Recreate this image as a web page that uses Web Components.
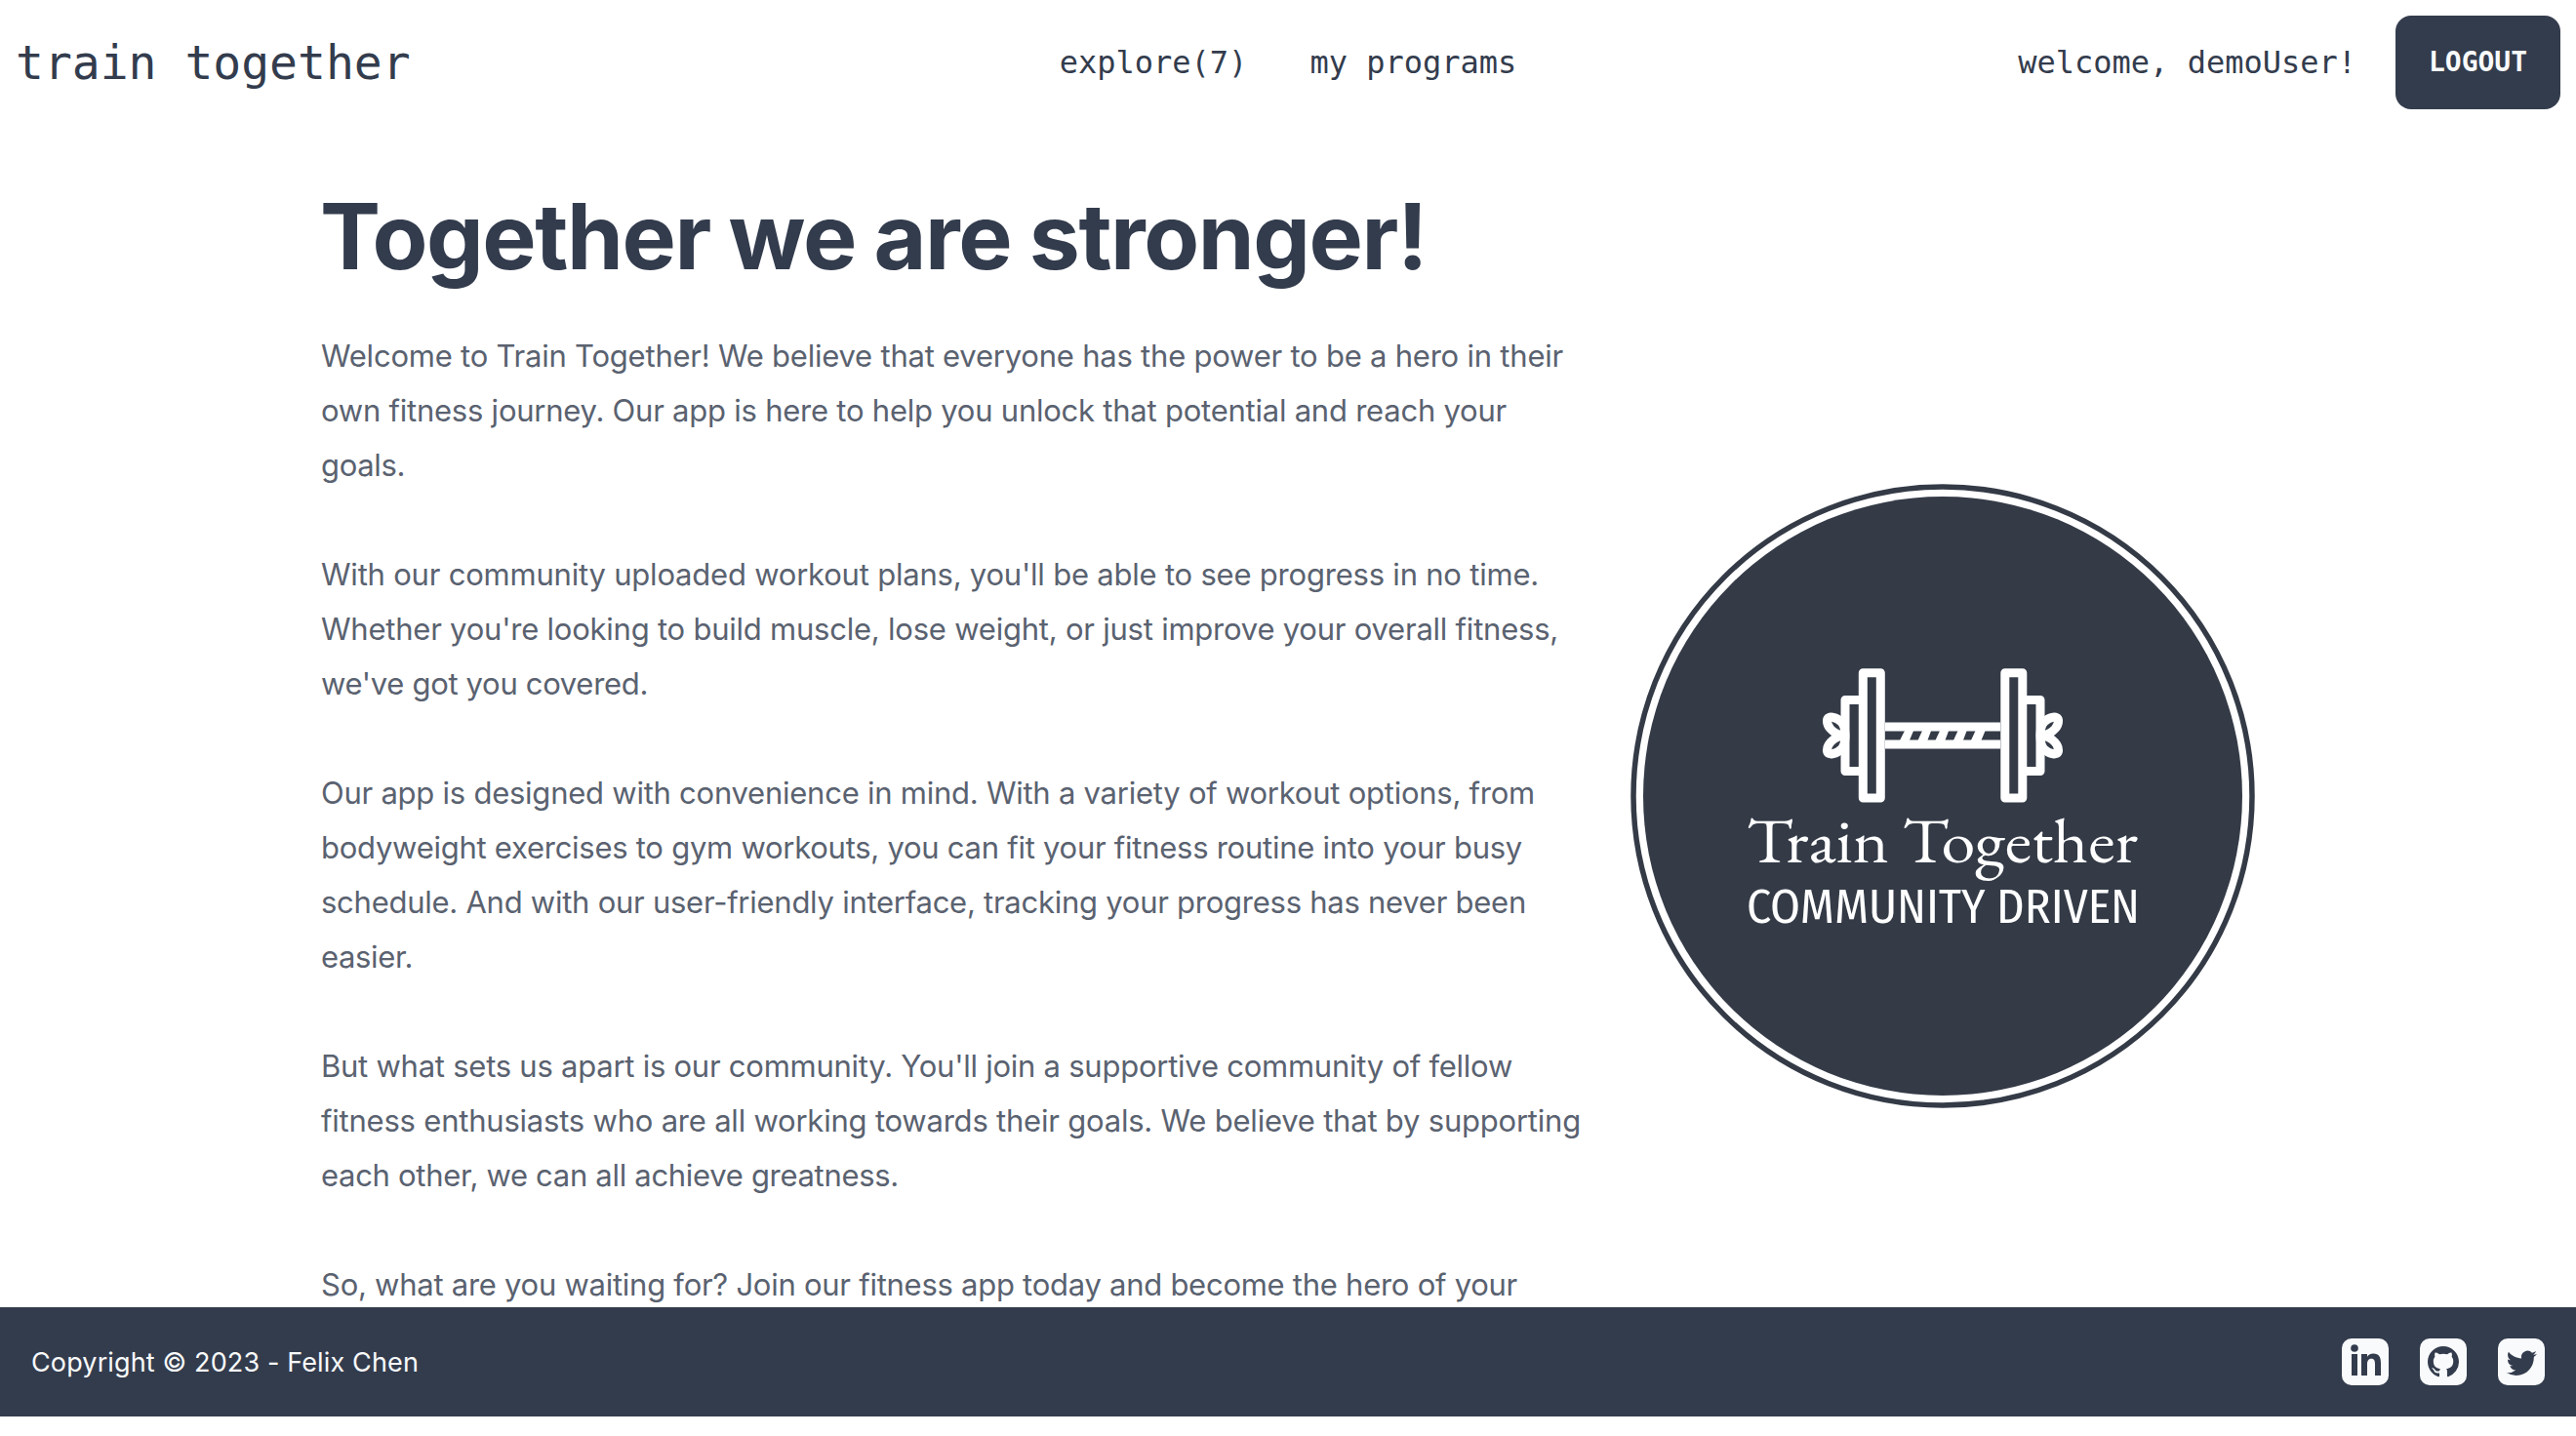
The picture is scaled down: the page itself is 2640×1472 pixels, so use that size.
<!DOCTYPE html>
<html lang="en"><head><meta charset="utf-8"><title>train together</title>
<style>html,body{margin:0;background:#fff}body{height:1472px;overflow:hidden}</style></head>
<body>
<tt-app></tt-app>
<script>
const define=(name,html,init)=>customElements.define(name,class extends HTMLElement{
  connectedCallback(){
    if(this.shadowRoot)return;
    const t=document.createElement('template');t.innerHTML=html;
    this.attachShadow({mode:'open'}).append(t.content.cloneNode(true));
    if(init)init(this);
  }
});

/* One line of text, tracked so that its advance equals the "w" attribute. */
define('tt-line',`<style>:host{display:block;white-space:pre}span{display:inline-block}</style><span><slot></slot></span>`,el=>{
  const w=+el.getAttribute('w');if(!w)return;
  const s=el.shadowRoot.querySelector('span');
  s.style.letterSpacing=((w-s.getBoundingClientRect().width)/el.textContent.length)+'px';
});

define('tt-button',`<style>
:host{display:flex;align-items:center;justify-content:center;box-sizing:border-box;width:169px;height:96px;border-radius:16px;background:#333c4d;color:#f9fafb;font:bold 28px "DejaVu Sans Mono",monospace;padding-bottom:2px}
</style><slot></slot>`);

define('tt-nav',`<style>
:host{display:flex;align-items:center;justify-content:space-between;box-sizing:border-box;height:128px;padding:0 16px;color:#333c4d;font:32px "DejaVu Sans Mono",monospace}
:host>div{display:flex;align-items:center;flex:1}
.brand{font-size:48px}
:host>.mid{gap:64px;flex:none}
:host>.end{justify-content:flex-end;gap:40px}
</style>
<div class="brand">train together</div>
<div class="mid"><span>explore(7)</span><span>my programs</span></div>
<div class="end"><span>welcome, demoUser!</span><tt-button>LOGOUT</tt-button></div>`);

define('tt-copy',`<style>
:host{display:block;width:1304px;color:#5a6270;font:31px/56px Inter,"Liberation Sans",sans-serif}
h1{margin:0 0 47px;color:#333c4d;font:bold 93px/96px Inter,sans-serif;word-spacing:-2px}
p{margin:0 0 56px;padding-left:1px}
</style>
<h1><tt-line w="1134">Together we are stronger!</tt-line></h1>
<p><tt-line w="1273">Welcome to Train Together! We believe that everyone has the power to be a hero in their</tt-line>
<tt-line w="1215">own fitness journey. Our app is here to help you unlock that potential and reach your</tt-line>
<tt-line w="86">goals.</tt-line></p>
<p><tt-line w="1248">With our community uploaded workout plans, you'll be able to see progress in no time.</tt-line>
<tt-line w="1268">Whether you're looking to build muscle, lose weight, or just improve your overall fitness,</tt-line>
<tt-line w="335">we've got you covered.</tt-line></p>
<p><tt-line w="1244">Our app is designed with convenience in mind. With a variety of workout options, from</tt-line>
<tt-line w="1231">bodyweight exercises to gym workouts, you can fit your fitness routine into your busy</tt-line>
<tt-line w="1235">schedule. And with our user-friendly interface, tracking your progress has never been</tt-line>
<tt-line w="94">easier.</tt-line></p>
<p><tt-line w="1221">But what sets us apart is our community. You'll join a supportive community of fellow</tt-line>
<tt-line w="1291">fitness enthusiasts who are all working towards their goals. We believe that by supporting</tt-line>
<tt-line w="592">each other, we can all achieve greatness.</tt-line></p>
<p><tt-line w="1226">So, what are you waiting for? Join our fitness app today and become the hero of your</tt-line></p>`);

define('tt-emblem',`<style>:host{display:block;width:640px;height:640px}svg{display:block}</style>
<svg width="640" height="640" viewBox="1671 496 640 640">
<circle cx="1991" cy="816" r="317" fill="#fff" stroke="#343b47" stroke-width="5.5"/>
<circle cx="1991" cy="816" r="307" fill="#343b47"/>
<g fill="none" stroke="#fff" stroke-width="9" stroke-linejoin="round">
<rect x="1909.3" y="689.7" width="18" height="128.4"/>
<rect x="2054.8" y="689.7" width="18" height="128.4"/>
<path d="M1909 717.5H1891V790.5H1909M2073 717.5H2091V790.5H2073"/>
<path d="M1932 745H2050M1932 763H2050"/>
<path id="leaf" d="M1888 754C1877 751 1872 744 1872.500 738C1873 733 1882 735 1887 740C1890 743 1891 748 1891 754M1888 754C1877 757 1872 764 1872.500 770C1873 775 1882 773 1887 768C1890 765 1891 760 1891 754"/>
<use href="#leaf" transform="translate(3982 0) scale(-1 1)"/>
</g>
<path fill="#fff" d="M1952.500 748H1961.500L1956.500 760H1946.500ZM1970.500 748H1979.500L1975 760H1965ZM1988.500 748H1997.500L1993 760H1983ZM2007 748H2016L2011.500 760H2001.500ZM2025 748H2035L2030 760H2019.500Z"/>
<g fill="#fff">
<text x="1790" y="884" font-family="EB Garamond,Cormorant Garamond,Liberation Serif,serif" font-size="66" textLength="401" lengthAdjust="spacingAndGlyphs">Train Together</text>
<text x="1790" y="945.500" font-family="Fira Sans Condensed,Fira Sans,Open Sans,sans-serif" font-size="50" textLength="403" lengthAdjust="spacingAndGlyphs">COMMUNITY DRIVEN</text>
</g></svg>`);

define('tt-social',`<style>:host{display:block;width:48px;height:48px}svg{display:block}</style><svg width="48" height="48"></svg>`,el=>{
  const shapes={
    linkedin:'<circle cx="13" cy="10" r="3.800"/><path d="M10 16h6v22h-6zM20 16h6v3c1-2 3.200-3.500 6.300-3.500 6 0 7.700 4 7.700 9.500v13h-6V26.500c0-3-.5-5.700-3.700-5.700-3.300 0-4.300 2.600-4.300 5.700V38h-6z"/>',
    github:'<path transform="translate(8 8) scale(2)" d="M8 0C3.580 0 0 3.580 0 8c0 3.540 2.290 6.530 5.470 7.590.4.070.55-.17.55-.38 0-.19-.01-.82-.01-1.490-2.010.37-2.530-.49-2.690-.94-.09-.23-.48-.94-.82-1.130-.28-.15-.68-.52-.01-.53.63-.01 1.080.58 1.230.82.72 1.210 1.870.87 2.330.66.070-.52.28-.87.51-1.070-1.780-.2-3.640-.89-3.640-3.950 0-.87.31-1.590.82-2.150-.08-.2-.36-1.020.08-2.120 0 0 .67-.21 2.200.82.64-.18 1.320-.27 2-.27s1.360.09 2 .27c1.530-1.040 2.200-.82 2.200-.82.44 1.100.16 1.920.08 2.120.51.56.82 1.270.82 2.150 0 3.070-1.870 3.750-3.650 3.950.29.25.54.73.54 1.480 0 1.070-.01 1.930-.01 2.200 0 .21.15.46.55.38A8.010 8.010 0 0 0 16 8c0-4.420-3.580-8-8-8z"/>',
    twitter:'<path transform="translate(8.800 9.700) scale(1.300)" d="M23.950 4.570a10 10 0 0 1-2.820.775 4.958 4.958 0 0 0 2.163-2.723c-.951.555-2.005.959-3.127 1.184a4.920 4.920 0 0 0-8.384 4.482C7.690 8.095 4.067 6.130 1.640 3.162a4.822 4.822 0 0 0-.666 2.475c0 1.710.87 3.213 2.188 4.096a4.904 4.904 0 0 1-2.228-.616v.060a4.923 4.923 0 0 0 3.946 4.827 4.996 4.996 0 0 1-2.212.085 4.936 4.936 0 0 0 4.604 3.417 9.867 9.867 0 0 1-6.102 2.105c-.39 0-.779-.023-1.170-.067a13.995 13.995 0 0 0 7.557 2.209c9.053 0 13.998-7.496 13.998-13.985 0-.21 0-.42-.015-.63A9.935 9.935 0 0 0 24 4.590z"/>'};
  el.shadowRoot.querySelector('svg').innerHTML='<rect width="48" height="48" rx="10" fill="#f9fafb"/><g fill="#333c4d">'+shapes[el.getAttribute('kind')]+'</g>';
});

define('tt-footer',`<style>
:host{display:flex;align-items:center;justify-content:space-between;box-sizing:border-box;height:112px;padding:0 32px;background:#333c4d;color:#f9fafb;font:27px/40px Inter,sans-serif}
tt-line{padding-top:2px}
div{display:flex;gap:32px}
</style><tt-line w="397">Copyright © 2023 - Felix Chen</tt-line>
<div><tt-social kind="linkedin"></tt-social><tt-social kind="github"></tt-social><tt-social kind="twitter"></tt-social></div>`);

define('tt-app',`<style>
:host{display:flex;flex-direction:column;height:1452px}
main{display:flex;align-items:flex-start;flex:1;min-height:0;overflow:hidden;padding:66px 328px 0;box-sizing:border-box}
tt-emblem{margin:302px 0 0 39px}
tt-footer{flex:none}tt-nav{flex:none}
</style><tt-nav></tt-nav><main><tt-copy></tt-copy><tt-emblem></tt-emblem></main><tt-footer></tt-footer>`);
</script></body></html>
